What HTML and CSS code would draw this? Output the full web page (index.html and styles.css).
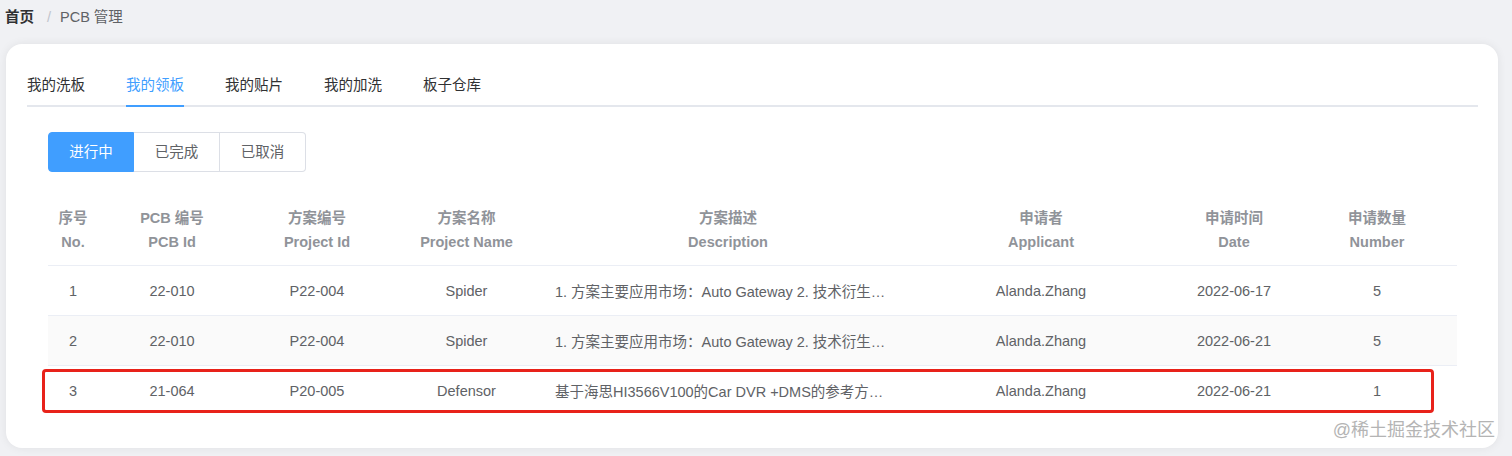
FILE: index.html
```html
<!DOCTYPE html>
<html lang="zh-CN">
<head>
<meta charset="utf-8">
<title>PCB 管理</title>
<link rel="stylesheet" href="styles.css">
</head>
<body>
<div class="breadcrumb">
  <span class="crumb-home">首页</span>
  <span class="crumb-sep">/</span>
  <span class="crumb-cur">PCB 管理</span>
</div>
<div class="card">
  <div class="tabs">
    <div class="tab">我的洗板</div>
    <div class="tab active">我的领板</div>
    <div class="tab">我的贴片</div>
    <div class="tab">我的加洗</div>
    <div class="tab">板子仓库</div>
  </div>
  <div class="seg">
    <div class="seg-btn on">进行中</div>
    <div class="seg-btn">已完成</div>
    <div class="seg-btn">已取消</div>
  </div>
  <div class="table-wrap">
    <table class="tbl">
      <colgroup>
        <col class="c1"><col class="c2"><col class="c3"><col class="c4"><col class="c5"><col class="c6"><col class="c7"><col class="c8">
      </colgroup>
      <thead>
        <tr>
          <th>序号<br>No.</th>
          <th>PCB 编号<br>PCB Id</th>
          <th>方案编号<br>Project Id</th>
          <th>方案名称<br>Project Name</th>
          <th>方案描述<br>Description</th>
          <th>申请者<br>Applicant</th>
          <th>申请时间<br>Date</th>
          <th>申请数量<br>Number</th>
        </tr>
      </thead>
      <tbody>
        <tr>
          <td>1</td><td>22-010</td><td>P22-004</td><td>Spider</td>
          <td class="desc">1. 方案主要应用市场：Auto Gateway 2. 技术衍生…</td>
          <td>Alanda.Zhang</td><td>2022-06-17</td><td>5</td>
        </tr>
        <tr class="stripe">
          <td>2</td><td>22-010</td><td>P22-004</td><td>Spider</td>
          <td class="desc">1. 方案主要应用市场：Auto Gateway 2. 技术衍生…</td>
          <td>Alanda.Zhang</td><td>2022-06-21</td><td>5</td>
        </tr>
        <tr>
          <td>3</td><td>21-064</td><td>P20-005</td><td>Defensor</td>
          <td class="desc">基于海思HI3566V100的Car DVR +DMS的参考方…</td>
          <td>Alanda.Zhang</td><td>2022-06-21</td><td>1</td>
        </tr>
      </tbody>
    </table>
    <div class="highlight"></div>
  </div>
  <div class="watermark">@稀土掘金技术社区</div>
</div>
</body>
</html>
```

FILE: styles.css
```css
html, body {
  margin: 0;
  padding: 0;
}
body {
  background: #f0f1f4;
  font-family: "Liberation Sans", "Noto Sans CJK SC", sans-serif;
  font-size: 14.5px;
  width: 1512px;
  height: 456px;
  overflow: hidden;
}
.breadcrumb {
  height: 34px;
  line-height: 34px;
  padding-left: 5px;
  display: flex;
  align-items: center;
}
.crumb-home {
  font-weight: bold;
  color: #303133;
}
.crumb-sep {
  color: #c0c4cc;
  margin: 0 9px 0 13px;
}
.crumb-cur {
  color: #606266;
}
.card {
  position: relative;
  margin: 10px 0 0 6px;
  width: 1492px;
  height: 404px;
  box-sizing: border-box;
  background: #fff;
  border-radius: 16px;
  box-shadow: 0 0 10px rgba(0, 0, 0, 0.07);
  padding: 22px 20px 0 21px;
}
.tabs {
  display: flex;
  gap: 41px;
  height: 39px;
  border-bottom: 2px solid #e4e7ed;
}
.tab {
  height: 39px;
  line-height: 39px;
  color: #303133;
  box-sizing: border-box;
  position: relative;
}
.tab.active {
  color: #409eff;
}
.tab.active::after {
  content: "";
  position: absolute;
  left: 0;
  right: 0;
  bottom: -2px;
  height: 2px;
  background: #409eff;
}
.seg {
  display: flex;
  margin: 25px 0 0 21px;
}
.seg-btn {
  width: 86px;
  height: 40px;
  box-sizing: border-box;
  border: 1px solid #dcdfe6;
  border-left: none;
  line-height: 38px;
  text-align: center;
  color: #606266;
}
.seg-btn:first-child {
  border-left: 1px solid #dcdfe6;
  border-radius: 4px 0 0 4px;
}
.seg-btn:last-child {
  border-radius: 0 4px 4px 0;
}
.seg-btn.on {
  background: #409eff;
  border-color: #409eff;
  color: #fff;
}
.table-wrap {
  position: relative;
  margin: 20px 0 0 21px;
  width: 1409px;
}
.tbl {
  width: 1409px;
  border-collapse: collapse;
  table-layout: fixed;
}
.c1 { width: 50px; }
.c2 { width: 148px; }
.c3 { width: 142px; }
.c4 { width: 157px; }
.c5 { width: 366px; }
.c6 { width: 260px; }
.c7 { width: 126px; }
.c8 { width: 160px; }
.tbl th {
  font-weight: bold;
  color: #909399;
  line-height: 24px;
  padding: 14px 0 11px;
  text-align: center;
  border-bottom: 1px solid #ebeef5;
}
.tbl td {
  height: 49px;
  padding: 0;
  text-align: center;
  color: #606266;
  border-bottom: 1px solid #ebeef5;
}
.tbl tr.stripe td {
  background: #fafafa;
}
.tbl tbody tr:last-child td {
  border-bottom: none;
}
.tbl td.desc {
  text-align: left;
  padding: 0 4px 0 10px;
  white-space: nowrap;
}
.highlight {
  position: absolute;
  left: -6px;
  top: 177px;
  width: 1392px;
  height: 44px;
  box-sizing: border-box;
  border: 3px solid #e8221a;
  border-radius: 4px;
  pointer-events: none;
}
.watermark {
  position: absolute;
  right: 3px;
  bottom: 7px;
  font-size: 18px;
  color: #b4b4b4;
  text-shadow: 0 0 1px #fff;
}
```
